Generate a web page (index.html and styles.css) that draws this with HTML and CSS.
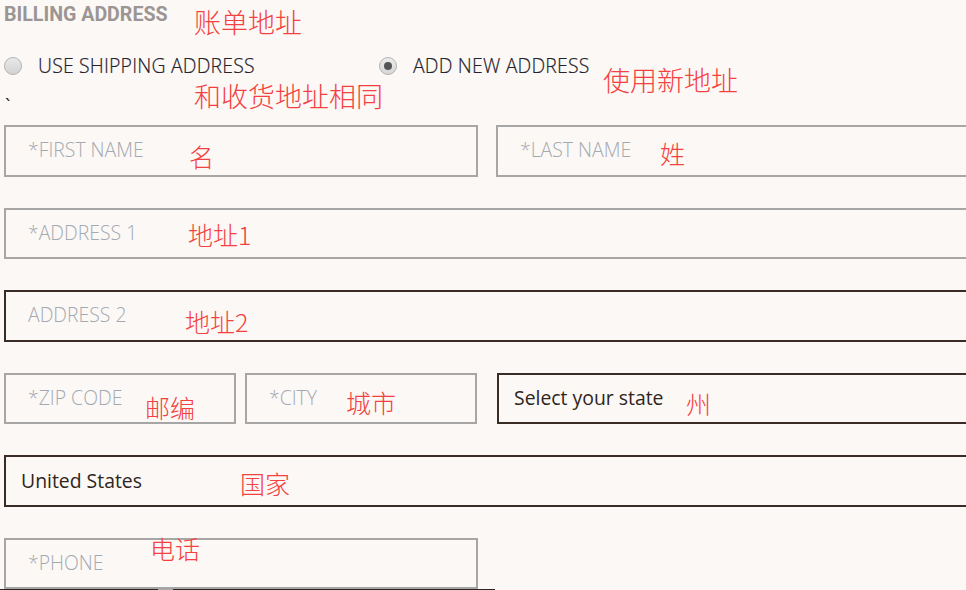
FILE: index.html
```html
<!DOCTYPE html>
<html lang="zh-CN">
<head>
<meta charset="utf-8">
<title>Billing address</title>
<link rel="stylesheet" href="styles.css">
</head>
<body>
<div class="page">
  <h2 class="title">BILLING ADDRESS</h2>

  <div class="choices">
    <label class="choice">
      <span class="radio"></span>
      <span class="choice-text">USE SHIPPING ADDRESS</span>
    </label>
    <label class="choice">
      <span class="radio radio-on"></span>
      <span class="choice-text">ADD NEW ADDRESS</span>
    </label>
  </div>

  <div class="tick">`</div>

  <div class="fields">
    <div class="row row-two">
      <input class="field" type="text" placeholder="*FIRST NAME">
      <input class="field" type="text" placeholder="*LAST NAME">
    </div>
    <div class="row">
      <input class="field" type="text" placeholder="*ADDRESS 1">
    </div>
    <div class="row">
      <input class="field field-dark" type="text" placeholder="ADDRESS 2">
    </div>
    <div class="row row-city">
      <input class="field" type="text" placeholder="*ZIP CODE">
      <input class="field" type="text" placeholder="*CITY">
      <select class="pick"><option>Select your state</option></select>
    </div>
    <div class="row">
      <select class="pick"><option>United States</option></select>
    </div>
    <div class="row row-two row-last">
      <input class="field" type="text" placeholder="*PHONE">
    </div>
  </div>

  <div class="strip"><span class="strip-mark"></span></div>

  <span class="note note-l" style="left:194px;top:8px">账单地址</span>
  <span class="note note-l" style="left:194px;top:82px">和收货地址相同</span>
  <span class="note note-l" style="left:603px;top:66px">使用新地址</span>
  <span class="note" style="left:189px;top:144px">名</span>
  <span class="note" style="left:660px;top:141px">姓</span>
  <span class="note" style="left:188px;top:222px">地址1</span>
  <span class="note" style="left:185px;top:309px">地址2</span>
  <span class="note" style="left:145px;top:395px">邮编</span>
  <span class="note" style="left:346px;top:390px">城市</span>
  <span class="note" style="left:686px;top:391px">州</span>
  <span class="note" style="left:240px;top:471px">国家</span>
  <span class="note" style="left:150px;top:536px">电话</span>
</div>
</body>
</html>
```
FILE: styles.css
```css
html, body {
  margin: 0;
  padding: 0;
  overflow: hidden;
  background: #fcf8f5;
}

body {
  font-family: "Open Sans", "Noto Sans", sans-serif;
  color: #2e2a2d;
}

.page {
  position: relative;
  width: 966px;
  padding: 3px 0 0 4px;
  height: 590px;
  box-sizing: border-box;
}

.title {
  margin: 0;
  font-family: Roboto, "Open Sans", sans-serif;
  font-size: 19.6px;
  line-height: 24px;
  font-weight: 700;
  color: #9b9593;
  letter-spacing: 0;
}

.choices {
  display: grid;
  grid-template-columns: 375px auto;
  margin-top: 27px;
  height: 24px;
}

.choice {
  display: flex;
  align-items: center;
  gap: 16px;
}

.choice-text {
  font-size: 19.4px;
  font-weight: 300;
  line-height: 24px;
  letter-spacing: 0.2px;
  color: #26222d;
  white-space: nowrap;
  -webkit-text-stroke: 0.2px #26222d;
}

.radio {
  width: 18px;
  height: 18px;
  box-sizing: border-box;
  border-radius: 50%;
  border: 1px solid #b3b3b3;
  background: linear-gradient(#e9e9e9, #d3d3d3);
  display: flex;
  align-items: center;
  justify-content: center;
}

.radio-on {
  background: linear-gradient(#ececec, #d6d6d6);
}

.radio-on::after {
  content: "";
  width: 8px;
  height: 8px;
  border-radius: 50%;
  background: #555555;
}

.tick {
  margin-top: 16px;
  font-size: 19.4px;
  line-height: 24px;
  height: 24px;
  padding-left: 1px;
  color: #222;
}

.fields {
  margin-top: 7px;
  width: 966px;
  display: flex;
  flex-direction: column;
  gap: 31px;
}

.row {
  display: grid;
  grid-template-columns: 1fr;
  height: 51.6px;
}

.row-last {
  height: 51px;
}

.row-two {
  grid-template-columns: 474px 474px;
  column-gap: 18px;
}

.row-city {
  grid-template-columns: 232px 232px 1fr;
  column-gap: 9px;
}

.row-city .pick {
  margin-left: 11px;
}

.field,
.pick {
  box-sizing: border-box;
  height: 100%;
  width: 100%;
  margin: 0;
  background: transparent;
  font-family: "Open Sans", "Noto Sans", sans-serif;
  font-size: 19.4px;
  outline: none;
  border-radius: 0;
}

.field {
  border: 2px solid #a6a6a6;
  padding: 0 22px 2px;
  font-weight: 300;
  color: #2e2520;
}

.field::placeholder {
  color: #a3a9b1;
  opacity: 1;
}

.field-dark {
  border-color: #3a2b25;
}

.pick {
  appearance: none;
  -webkit-appearance: none;
  border: 2px solid #3a2b25;
  padding: 0 15px 2px;
  font-weight: 400;
  color: #2e2520;
}

.strip {
  margin-left: -4px;
  width: 495px;
  height: 1px;
  background: #2b2523;
  display: flex;
}

.strip-mark {
  margin-left: 158px;
  width: 15px;
  height: 1px;
  background: #a8a8a8;
}

.note {
  position: absolute;
  font-family: "Noto Sans CJK SC", "Noto Sans", sans-serif;
  font-size: 25px;
  line-height: 1;
  font-weight: 300;
  color: #f44040;
  white-space: nowrap;
}

.note-l {
  font-size: 27px;
}
```
